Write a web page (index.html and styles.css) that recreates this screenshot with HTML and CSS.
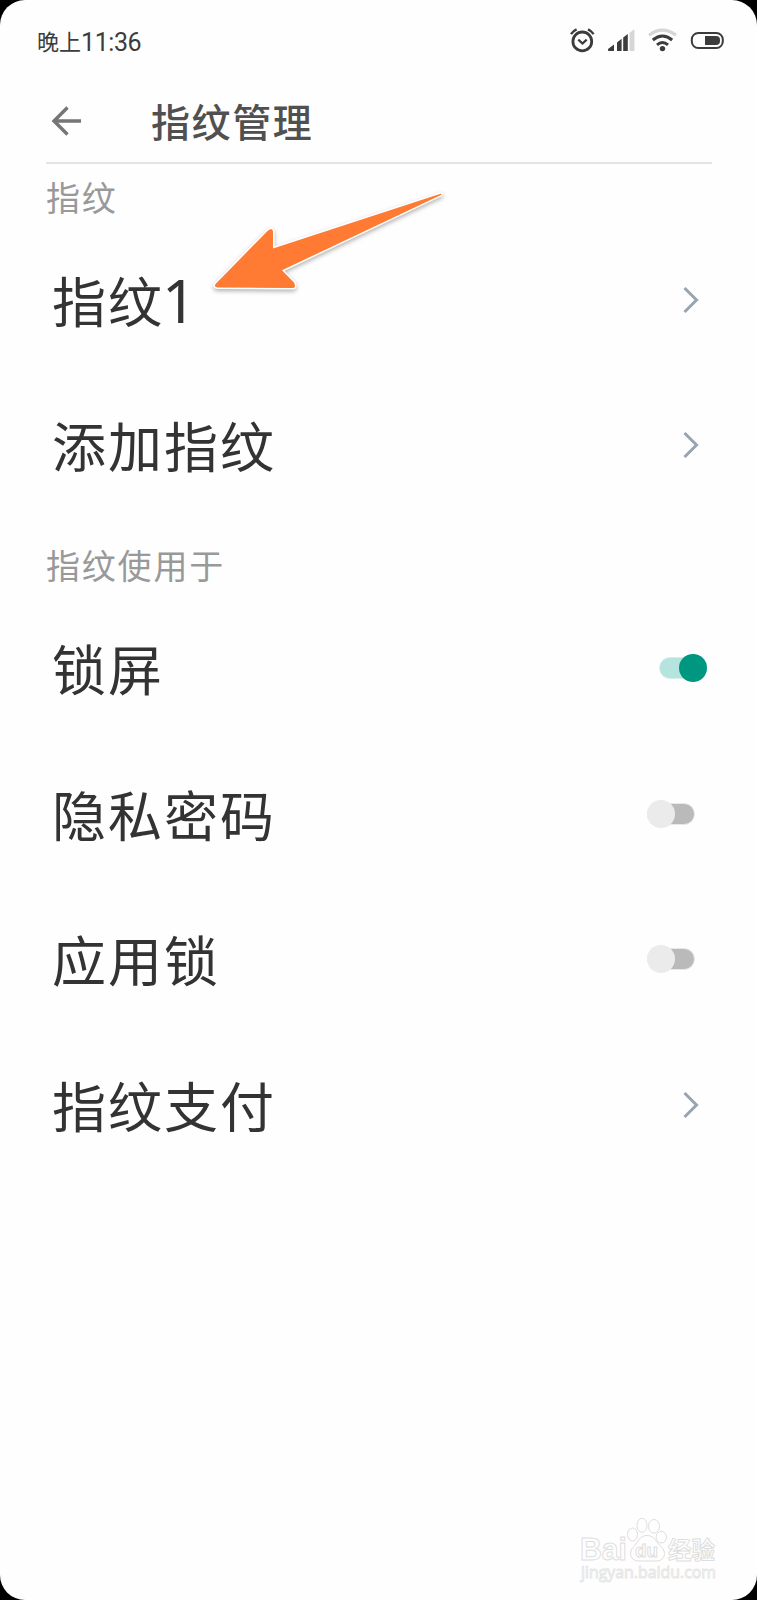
FILE: index.html
```
<!DOCTYPE html>
<html lang="zh-CN">
<head>
    <meta charset="UTF-8">
    <meta name="viewport" content="width=device-width, initial-scale=1.0">
    <title>指纹管理</title>
    <link rel="stylesheet" href="styles.css">
</head>
<body>
    <div class="screen">
        <!-- Status bar -->
        <div class="status-bar">
            <div class="time">晚上<span class="digits">11:36</span></div>
            <svg class="status-icons" width="156" height="28" viewBox="0 0 156 28">
                <!-- alarm -->
                <g fill="none" stroke="#3c3c3c" stroke-width="2.8">
                    <circle cx="13.3" cy="15.4" r="9.4"/>
                    <path d="M2 8.2Q4 5 7.6 3.4M19 3.4Q22.6 5 24.6 8.2" stroke-width="2.4"/>
                    <path d="M9.3 13.6l4.2 4 4.2-4" stroke-width="2.2"/>
                </g>
                <!-- signal -->
                <path fill="#3c3c3c" d="M39 24.6V23l6-4.4v6.4h-5.4zM48 16.4l4.6-3.6V25H48zM54.2 11.4L58.8 8v17h-4.6z"/>
                <path fill="#d6d6d6" d="M60.6 6.8l4.8-3.6V25h-4.8z"/>
                <!-- wifi -->
                <g fill="none" stroke="#3c3c3c" stroke-width="3">
                    <path d="M80 9.2Q93.5-1 107 9.2" stroke="#d6d6d6"/>
                    <path d="M83.8 14Q93.5 6 103.2 14"/>
                    <path d="M88 18.8Q93.5 14.2 99 18.8"/>
                </g>
                <circle cx="93.5" cy="22.6" r="2.7" fill="#3c3c3c"/>
                <!-- battery -->
                <rect x="122.8" y="7" width="31" height="15" rx="6.5" fill="none" stroke="#3c3c3c" stroke-width="2"/>
                <path fill="#3c3c3c" d="M136 10h11q4 0 4 4v1q0 4-4 4H136z"/>
            </svg>
        </div>

        <!-- Header -->
        <div class="header">
            <svg class="back" width="30" height="30" viewBox="0 0 30 30" fill="none" stroke="#757575" stroke-width="3.4">
                <path d="M2.5 15H30M16.5 1.5L3 15l13.5 13.5"/>
            </svg>
            <h1>指纹管理</h1>
        </div>

        <!-- Fingerprints -->
        <h2 class="section-title">指纹</h2>
        <div class="row">
            <span>指纹<span class="number">1</span></span>
            <svg class="chevron" width="16" height="28" viewBox="0 0 16 28"><path d="M1.5 2l12 12-12 12"/></svg>
        </div>
        <div class="row">
            <span>添加指纹</span>
            <svg class="chevron" width="16" height="28" viewBox="0 0 16 28"><path d="M1.5 2l12 12-12 12"/></svg>
        </div>

        <!-- Used for -->
        <h2 class="section-title usage">指纹使用于</h2>
        <div class="row">
            <span>锁屏</span>
            <div class="switch on"><div class="knob"></div></div>
        </div>
        <div class="row">
            <span>隐私密码</span>
            <div class="switch"><div class="knob"></div></div>
        </div>
        <div class="row">
            <span>应用锁</span>
            <div class="switch"><div class="knob"></div></div>
        </div>
        <div class="row">
            <span>指纹支付</span>
            <svg class="chevron" width="16" height="28" viewBox="0 0 16 28"><path d="M1.5 2l12 12-12 12"/></svg>
        </div>

        <!-- Pointer arrow -->
        <svg class="pointer" width="250" height="120" viewBox="205 180 250 120">
            <path d="M216 283.5L268 230.5Q272.5 227 273 231.5L273 248.5L440.5 193.8Q442.5 194 441 195L282 270.3L294 282.5Q296.5 287.8 293 288L217.5 287.5Q213 287 216 283.5Z"/>
        </svg>

        <!-- Watermark -->
        <svg class="watermark" width="150" height="70" viewBox="575 1514 150 70">
            <g>
                <ellipse cx="632.5" cy="1534.5" rx="5" ry="6.5"/>
                <ellipse cx="642" cy="1525.3" rx="5" ry="7"/>
                <ellipse cx="654" cy="1526.3" rx="5.5" ry="6.8"/>
                <ellipse cx="661.3" cy="1537.2" rx="5.2" ry="5.8"/>
                <path d="M647 1535.5c-8 0-9 7-13 11-6 5-4 14 4 14.5h19c8-.5 10-9 4-14.5-5-4-6-11-14-11z"/>
            </g>
            <text x="580" y="1560" font-size="31" textLength="47" lengthAdjust="spacingAndGlyphs">Bai</text>
            <text x="635" y="1557" font-size="19" textLength="23" lengthAdjust="spacingAndGlyphs">du</text>
            <text class="cn" x="668" y="1559" font-size="24" textLength="47" lengthAdjust="spacingAndGlyphs">经验</text>
            <text class="url" x="581" y="1578" font-size="17" textLength="135" lengthAdjust="spacingAndGlyphs">jingyan.baidu.com</text>
        </svg>
    </div>
</body>
</html>
```
FILE: styles.css
```
* {
    margin: 0;
    padding: 0;
    box-sizing: border-box;
}

body {
    background: #000;
    font-family: "Noto Sans CJK SC", sans-serif;
}

.screen {
    position: relative;
    width: 757px;
    height: 1600px;
    background: #fefefe;
    border-radius: 25px;
    overflow: hidden;
}

/* Status bar */
.status-bar {
    height: 80px;
    padding: 0 32px 0 37px;
    display: flex;
    justify-content: space-between;
    align-items: center;
}

.time {
    display: flex;
    align-items: center;
    font-size: 22px;
    line-height: 32px;
    color: #3c3c3c;
}

.digits {
    padding-top: 5px;
    font-family: Roboto, sans-serif;
    font-size: 25px;
    letter-spacing: -0.4px;
}

/* Header */
.header {
    height: 84px;
    margin: 0 45px 0 46px;
    padding-left: 5px;
    display: flex;
    align-items: center;
    border-bottom: 2px solid #e4e4e4;
}

.header h1 {
    margin-left: 70px;
    padding-bottom: 2px;
    font-size: 39px;
    font-weight: 500;
    letter-spacing: 1.6px;
    line-height: 60px;
    color: #505050;
}

/* Lists */
.section-title {
    height: 63px;
    padding: 8px 46px 0;
    font-size: 34px;
    font-weight: 400;
    letter-spacing: 1.8px;
    line-height: 50px;
    color: #999;
}

.section-title.usage {
    height: 77.5px;
    padding-top: 22px;
}

.row {
    height: 145.5px;
    padding: 0 58.5px 0 52px;
    display: flex;
    justify-content: space-between;
    align-items: center;
    font-size: 54px;
    letter-spacing: 2px;
    line-height: 80px;
    color: #333;
}

.number {
    margin-left: -2px;
    font-family: "Noto Sans", sans-serif;
    font-size: 60px;
    line-height: 1;
}

.chevron {
    fill: none;
    stroke: #98a4b2;
    stroke-width: 3;
}

/* Switches */
.switch {
    width: 48px;
    height: 22px;
    margin-right: 3.5px;
    display: flex;
    align-items: center;
    background: #bababa;
    border: 1px solid #e8e8e8;
    border-radius: 11px;
}

.knob {
    flex: none;
    width: 28px;
    height: 28px;
    margin-left: -1px;
    border-radius: 50%;
    background: #ebebeb;
}

.switch.on {
    justify-content: flex-end;
    margin-right: -8px;
    background: #b5e3dd;
    border-color: #d6efeb;
}

.switch.on .knob {
    margin: 0 -1px 0 0;
    background: #009780;
}

/* Overlays */
.pointer {
    position: absolute;
    left: 205px;
    top: 180px;
    filter: drop-shadow(0 2px 2px rgba(0, 0, 0, 0.3));
}

.pointer path {
    fill: #ff7a33;
    stroke: #fff;
    stroke-width: 3;
    stroke-linejoin: round;
    paint-order: stroke;
}

.watermark {
    position: absolute;
    left: 575px;
    top: 1514px;
    fill: #fefefe;
    stroke: #dedede;
    stroke-width: 1;
    font-family: "Liberation Sans", sans-serif;
    font-weight: bold;
}

.watermark .cn {
    font-family: "Noto Sans CJK SC", sans-serif;
}

.watermark .url {
    font-family: "Open Sans", sans-serif;
    font-weight: 400;
    stroke: #e6e6e6;
}
```
